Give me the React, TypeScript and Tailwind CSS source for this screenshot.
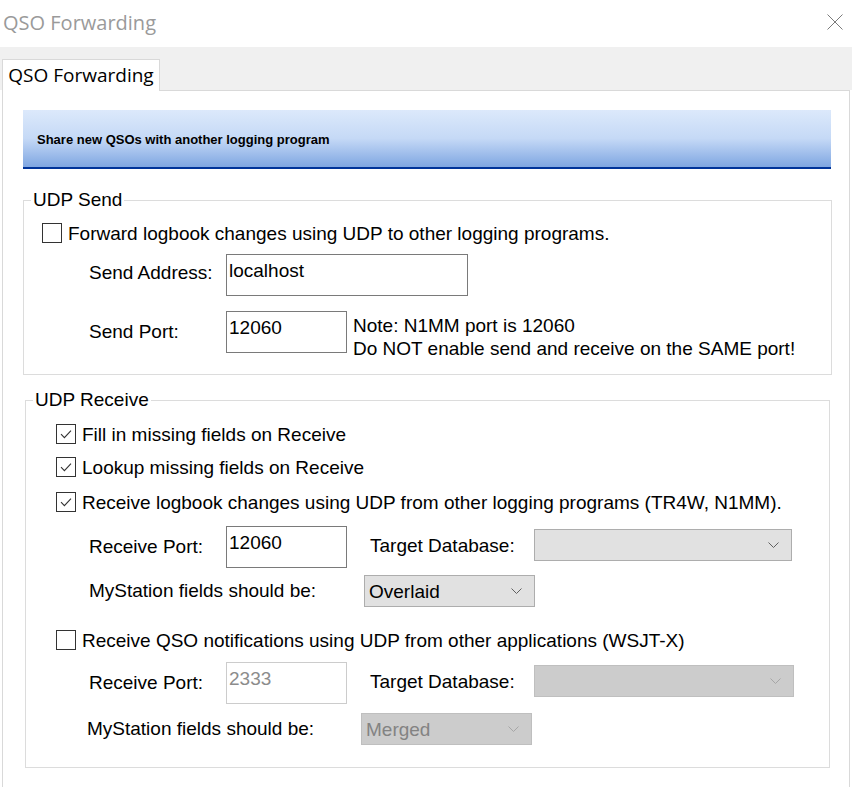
import React from 'react'

const body = { fontFamily: '"Liberation Sans", Arial, sans-serif' }
const ui = { fontFamily: '"Open Sans", "Noto Sans", sans-serif' }

function Check({ checked }: { checked?: boolean }) {
  return (
    <span className="flex h-[20px] w-[20px] shrink-0 items-center justify-center border border-[#333333] bg-white">
      {checked ? (
        <svg width="14" height="14" viewBox="0 0 14 14" fill="none">
          <path d="M2 7.2 L5.4 10.6 L12 3.6" stroke="#333333" strokeWidth="1.1" />
        </svg>
      ) : null}
    </span>
  )
}

function CheckRow({ checked, label, className }: { checked?: boolean; label: string; className?: string }) {
  return (
    <div className={`flex h-[20px] items-center ${className ?? ''}`}>
      <Check checked={checked} />
      <span className="ml-[6px] text-[19px] leading-none text-black">{label}</span>
    </div>
  )
}

function TextBox({ value, width, disabled }: { value: string; width: string; disabled?: boolean }) {
  return (
    <div
      className={`${width} h-[42px] shrink-0 bg-white pl-[2px] pt-[6px] text-[19px] leading-none ${
        disabled ? 'border border-[#cccccc] text-[#8c8c8c]' : 'border border-[#7a7a7a] text-black'
      }`}
    >
      {value}
    </div>
  )
}

function Combo({ value, width, disabled, className }: { value?: string; width: string; disabled?: boolean; className?: string }) {
  return (
    <div
      className={`${width} flex h-[32px] shrink-0 items-center justify-between pl-[4px] pr-[12px] text-[19px] leading-none ${
        disabled ? 'border border-[#bfbfbf] bg-[#cccccc] text-[#838383]' : 'border border-[#adadad] bg-[#e1e1e1] text-black'
      } ${className ?? ''}`}
    >
      <span>{value ?? ''}</span>
      <svg width="11" height="7" viewBox="0 0 11 7" fill="none">
        <path d="M0.5 0.5 L5.5 5.5 L10.5 0.5" stroke={disabled ? '#a6a6a6' : '#606060'} strokeWidth="1" />
      </svg>
    </div>
  )
}

export default function App() {
  return (
    <div className="h-[787px] w-[852px] overflow-hidden bg-white text-black" style={body}>
      {/* title bar */}
      <div className="flex h-[47px] items-center justify-between pl-[3px] pr-[9px]">
        <span className="pb-[2px] text-[20px] text-[#9a9a9a]" style={ui}>
          QSO Forwarding
        </span>
        <svg width="16" height="16" viewBox="0 0 16 16" fill="none" className="mb-[3px]">
          <path d="M0.5 0.5 L15.5 15.5 M15.5 0.5 L0.5 15.5" stroke="#7a7a7a" strokeWidth="1" />
        </svg>
      </div>

      {/* tab strip */}
      <div className="flex h-[43px] items-end bg-[#f0f0f0] pl-[2px]">
        <div
          className="relative z-10 -mb-px flex h-[32px] w-[158px] items-center justify-center border-x border-t border-[#d9d9d9] bg-white text-[19px] text-black"
          style={ui}
        >
          QSO Forwarding
        </div>
      </div>

      {/* tab page */}
      <div className="mx-[2px] h-[697px] border-x border-t border-[#d9d9d9] bg-[#ffffff] pl-[20px] pt-[19px]">
        <div className="flex h-[59px] w-[808px] items-center border-b-2 border-[#003399] bg-gradient-to-b from-[#dce9fb] via-[#c5d9f6] to-[#7fa6e1] pl-[14px]">
          <span className="pt-[3px] text-[13px] font-bold text-black">Share new QSOs with another logging program</span>
        </div>

        {/* UDP Send */}
        <fieldset className="mt-[21px] w-[809px] border border-[#dcdcdc] pb-[21px]">
          <legend className="ml-[7px] px-[2px] text-[19px] leading-[20px]">UDP Send</legend>
          <CheckRow className="ml-[18px] mt-[13px]" label="Forward logbook changes using UDP to other logging programs." />
          <div className="ml-[65px] mt-[11px] flex items-center">
            <span className="w-[137px] pb-[4px] text-[19px]">Send Address:</span>
            <TextBox value="localhost" width="w-[242px]" />
          </div>
          <div className="ml-[65px] mt-[15px] flex h-[42px] items-start">
            <span className="w-[137px] self-center text-[19px]">Send Port:</span>
            <TextBox value="12060" width="w-[121px]" />
            <div className="ml-[6px] pt-[3px] text-[19px] leading-[23px]">
              <div>Note: N1MM port is 12060</div>
              <div>Do NOT enable send and receive on the SAME port!</div>
            </div>
          </div>
        </fieldset>

        {/* UDP Receive */}
        <fieldset className="ml-[2px] mt-[15px] w-[805px] border border-[#dcdcdc] pb-[22px]">
          <legend className="ml-[7px] px-[2px] text-[19px] leading-[20px]">UDP Receive</legend>
          <CheckRow checked className="ml-[30px] mt-[14px]" label="Fill in missing fields on Receive" />
          <CheckRow checked className="ml-[30px] mt-[13px]" label="Lookup missing fields on Receive" />
          <CheckRow checked className="ml-[30px] mt-[15px]" label="Receive logbook changes using UDP from other logging programs (TR4W, N1MM)." />
          <div className="ml-[63px] mt-[14px] flex h-[42px] items-start">
            <span className="w-[137px] self-center text-[19px]">Receive Port:</span>
            <TextBox value="12060" width="w-[121px]" />
            <span className="ml-[23px] w-[164px] self-center pb-[2px] text-[19px]">Target Database:</span>
            <Combo width="w-[258px]" className="mt-[3px]" />
          </div>
          <div className="ml-[63px] mt-[7px] flex items-center">
            <span className="w-[275px] text-[19px]">MyStation fields should be:</span>
            <Combo value="Overlaid" width="w-[171px]" />
          </div>
          <CheckRow className="ml-[30px] mt-[23px]" label="Receive QSO notifications using UDP from other applications (WSJT-X)" />
          <div className="ml-[63px] mt-[12px] flex h-[42px] items-start">
            <span className="w-[137px] self-center text-[19px]">Receive Port:</span>
            <TextBox value="2333" width="w-[121px]" disabled />
            <span className="ml-[23px] w-[164px] self-center pb-[2px] text-[19px]">Target Database:</span>
            <Combo width="w-[260px]" disabled className="mt-[3px]" />
          </div>
          <div className="ml-[61px] mt-[9px] flex items-center">
            <span className="w-[274px] text-[19px]">MyStation fields should be:</span>
            <Combo value="Merged" width="w-[171px]" disabled />
          </div>
        </fieldset>
      </div>
    </div>
  )
}
